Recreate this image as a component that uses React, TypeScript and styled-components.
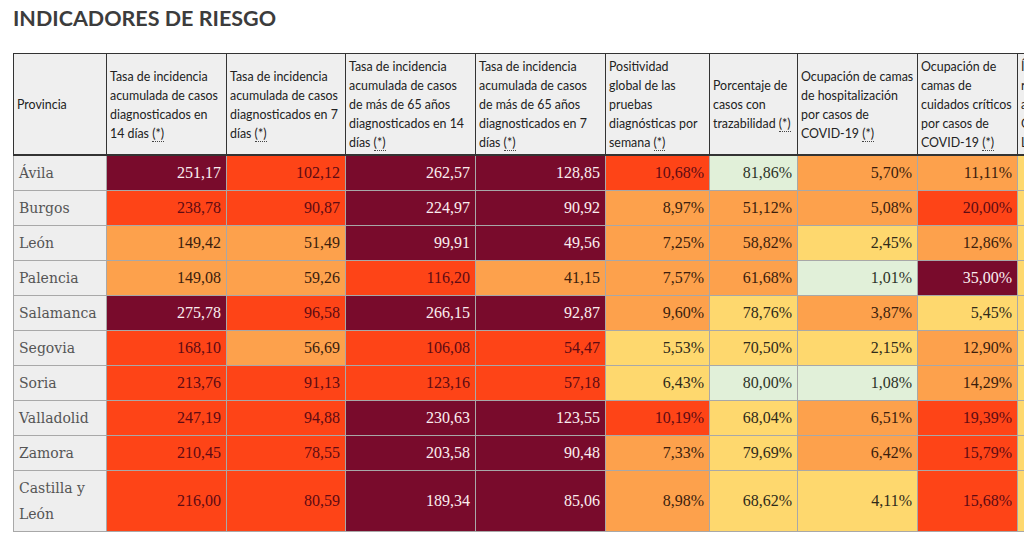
import React from "react";
import styled, { createGlobalStyle } from "styled-components";

const GlobalStyle = createGlobalStyle`
  html, body {
    margin: 0;
    padding: 0;
    background: #fff;
    overflow: hidden;
  }
`;

const Page = styled.div`
  padding: 0 0 0 13px;
  width: 1011px;
  overflow: hidden;
`;

const Title = styled.h2`
  margin: 0;
  padding: 4px 0 0;
  height: 53px;
  box-sizing: border-box;
  font-family: Lato, "Liberation Sans", sans-serif;
  font-weight: 700;
  font-size: 21.5px;
  line-height: 28px;
  color: #3c3c3c;
`;

const Table = styled.table`
  border-collapse: collapse;
  table-layout: fixed;
  width: 1124px;
`;

const HeadCell = styled.th`
  background: #efefef;
  border: 1px solid #333;
  border-bottom: 2px solid #333;
  padding: 3px 2px 2px 3px;
  text-align: left;
  vertical-align: middle;
  font-family: Lato, "Liberation Sans", sans-serif;
  font-weight: 400;
  font-size: 12.4px;
  line-height: 19px;
  color: #222;
`;

const Abbr = styled.abbr`
  text-decoration: none;
  border-bottom: 1px dotted #444;
`;

const NoWrap = styled.span`
  white-space: nowrap;
`;

const Row = styled.tr`
  height: 35px;
`;

const NameCell = styled.td`
  background: #eeeeee;
  border: 1px solid #a8a8a8;
  padding: 4px 5px;
  font-family: "DejaVu Serif", serif;
  font-size: 14px;
  line-height: 26px;
  color: #555;
`;

type Level = "m" | "r" | "o" | "y" | "g";

const palette: Record<Level, { bg: string; fg: string }> = {
  m: { bg: "#790b2c", fg: "#fbeef0" },
  r: { bg: "#fe4417", fg: "#5e0b14" },
  o: { bg: "#fda14c", fg: "#3b1d0c" },
  y: { bg: "#fed86e", fg: "#2f2a1a" },
  g: { bg: "#e1f0d9", fg: "#2d3328" },
};

const ValueCell = styled.td<{ $level: Level }>`
  background: ${(p) => palette[p.$level].bg};
  color: ${(p) => palette[p.$level].fg};
  border: 1px solid #a8a8a8;
  padding: 4px 5px;
  text-align: right;
  font-family: "Liberation Serif", serif;
  font-size: 16px;
  line-height: 26px;
`;

const widths = [93, 120, 119, 130, 130, 104, 88, 120, 100, 120];

const Star = () => <Abbr title="Más información">(*)</Abbr>;

const headers: React.ReactNode[] = [
  "Provincia",
  <>Tasa de incidencia acumulada de casos diagnosticados en 14 días <Star /></>,
  <>Tasa de incidencia acumulada de casos diagnosticados en 7 días <Star /></>,
  <>Tasa de incidencia acumulada de casos de más de 65 años diagnosticados en 14 días <Star /></>,
  <>Tasa de incidencia acumulada de casos de más de 65 años diagnosticados en 7 días <Star /></>,
  <>Positividad<br />global de las pruebas diagnósticas por semana <Star /></>,
  <>Porcentaje de casos con trazabilidad <Star /></>,
  <>Ocupación de camas de hospitalización por casos de <NoWrap>COVID-19 <Star /></NoWrap></>,
  <>Ocupación de camas de cuidados críticos por casos de <NoWrap>COVID-19 <Star /></NoWrap></>,
  <>Índice de<br />reproducción<br />acumulado<br />COVID-19<br />Letalidad <Star /></>,
];

type Cell = [string, Level];

const rows: { name: React.ReactNode; cells: Cell[] }[] = [
  { name: "Ávila", cells: [["251,17", "m"], ["102,12", "r"], ["262,57", "m"], ["128,85", "m"], ["10,68%", "r"], ["81,86%", "g"], ["5,70%", "o"], ["11,11%", "o"], ["0,92", "y"]] },
  { name: "Burgos", cells: [["238,78", "r"], ["90,87", "r"], ["224,97", "m"], ["90,92", "m"], ["8,97%", "o"], ["51,12%", "o"], ["5,08%", "o"], ["20,00%", "r"], ["0,95", "y"]] },
  { name: "León", cells: [["149,42", "o"], ["51,49", "o"], ["99,91", "m"], ["49,56", "m"], ["7,25%", "o"], ["58,82%", "o"], ["2,45%", "y"], ["12,86%", "o"], ["0,89", "y"]] },
  { name: "Palencia", cells: [["149,08", "o"], ["59,26", "o"], ["116,20", "r"], ["41,15", "o"], ["7,57%", "o"], ["61,68%", "o"], ["1,01%", "g"], ["35,00%", "m"], ["0,97", "y"]] },
  { name: "Salamanca", cells: [["275,78", "m"], ["96,58", "r"], ["266,15", "m"], ["92,87", "m"], ["9,60%", "o"], ["78,76%", "y"], ["3,87%", "o"], ["5,45%", "y"], ["0,91", "y"]] },
  { name: "Segovia", cells: [["168,10", "r"], ["56,69", "o"], ["106,08", "r"], ["54,47", "r"], ["5,53%", "y"], ["70,50%", "y"], ["2,15%", "y"], ["12,90%", "o"], ["0,88", "y"]] },
  { name: "Soria", cells: [["213,76", "r"], ["91,13", "r"], ["123,16", "r"], ["57,18", "r"], ["6,43%", "y"], ["80,00%", "g"], ["1,08%", "g"], ["14,29%", "o"], ["0,93", "y"]] },
  { name: "Valladolid", cells: [["247,19", "r"], ["94,88", "r"], ["230,63", "m"], ["123,55", "m"], ["10,19%", "r"], ["68,04%", "y"], ["6,51%", "o"], ["19,39%", "r"], ["0,96", "y"]] },
  { name: "Zamora", cells: [["210,45", "r"], ["78,55", "r"], ["203,58", "m"], ["90,48", "m"], ["7,33%", "o"], ["79,69%", "y"], ["6,42%", "o"], ["15,79%", "r"], ["0,90", "y"]] },
  { name: <>Castilla y<br />León</>, cells: [["216,00", "r"], ["80,59", "r"], ["189,34", "m"], ["85,06", "m"], ["8,98%", "o"], ["68,62%", "y"], ["4,11%", "y"], ["15,68%", "r"], ["0,93", "y"]] },
];

export default function App() {
  return (
    <Page>
      <GlobalStyle />
      <Title>INDICADORES DE RIESGO</Title>
      <Table>
        <colgroup>
          {widths.map((w, i) => (
            <col key={i} style={{ width: w }} />
          ))}
        </colgroup>
        <thead>
          <tr>
            {headers.map((h, i) => (
              <HeadCell key={i}>{h}</HeadCell>
            ))}
          </tr>
        </thead>
        <tbody>
          {rows.map((r, i) => (
            <Row key={i}>
              <NameCell>{r.name}</NameCell>
              {r.cells.map(([v, l], j) => (
                <ValueCell key={j} $level={l}>
                  {v}
                </ValueCell>
              ))}
            </Row>
          ))}
        </tbody>
      </Table>
    </Page>
  );
}
